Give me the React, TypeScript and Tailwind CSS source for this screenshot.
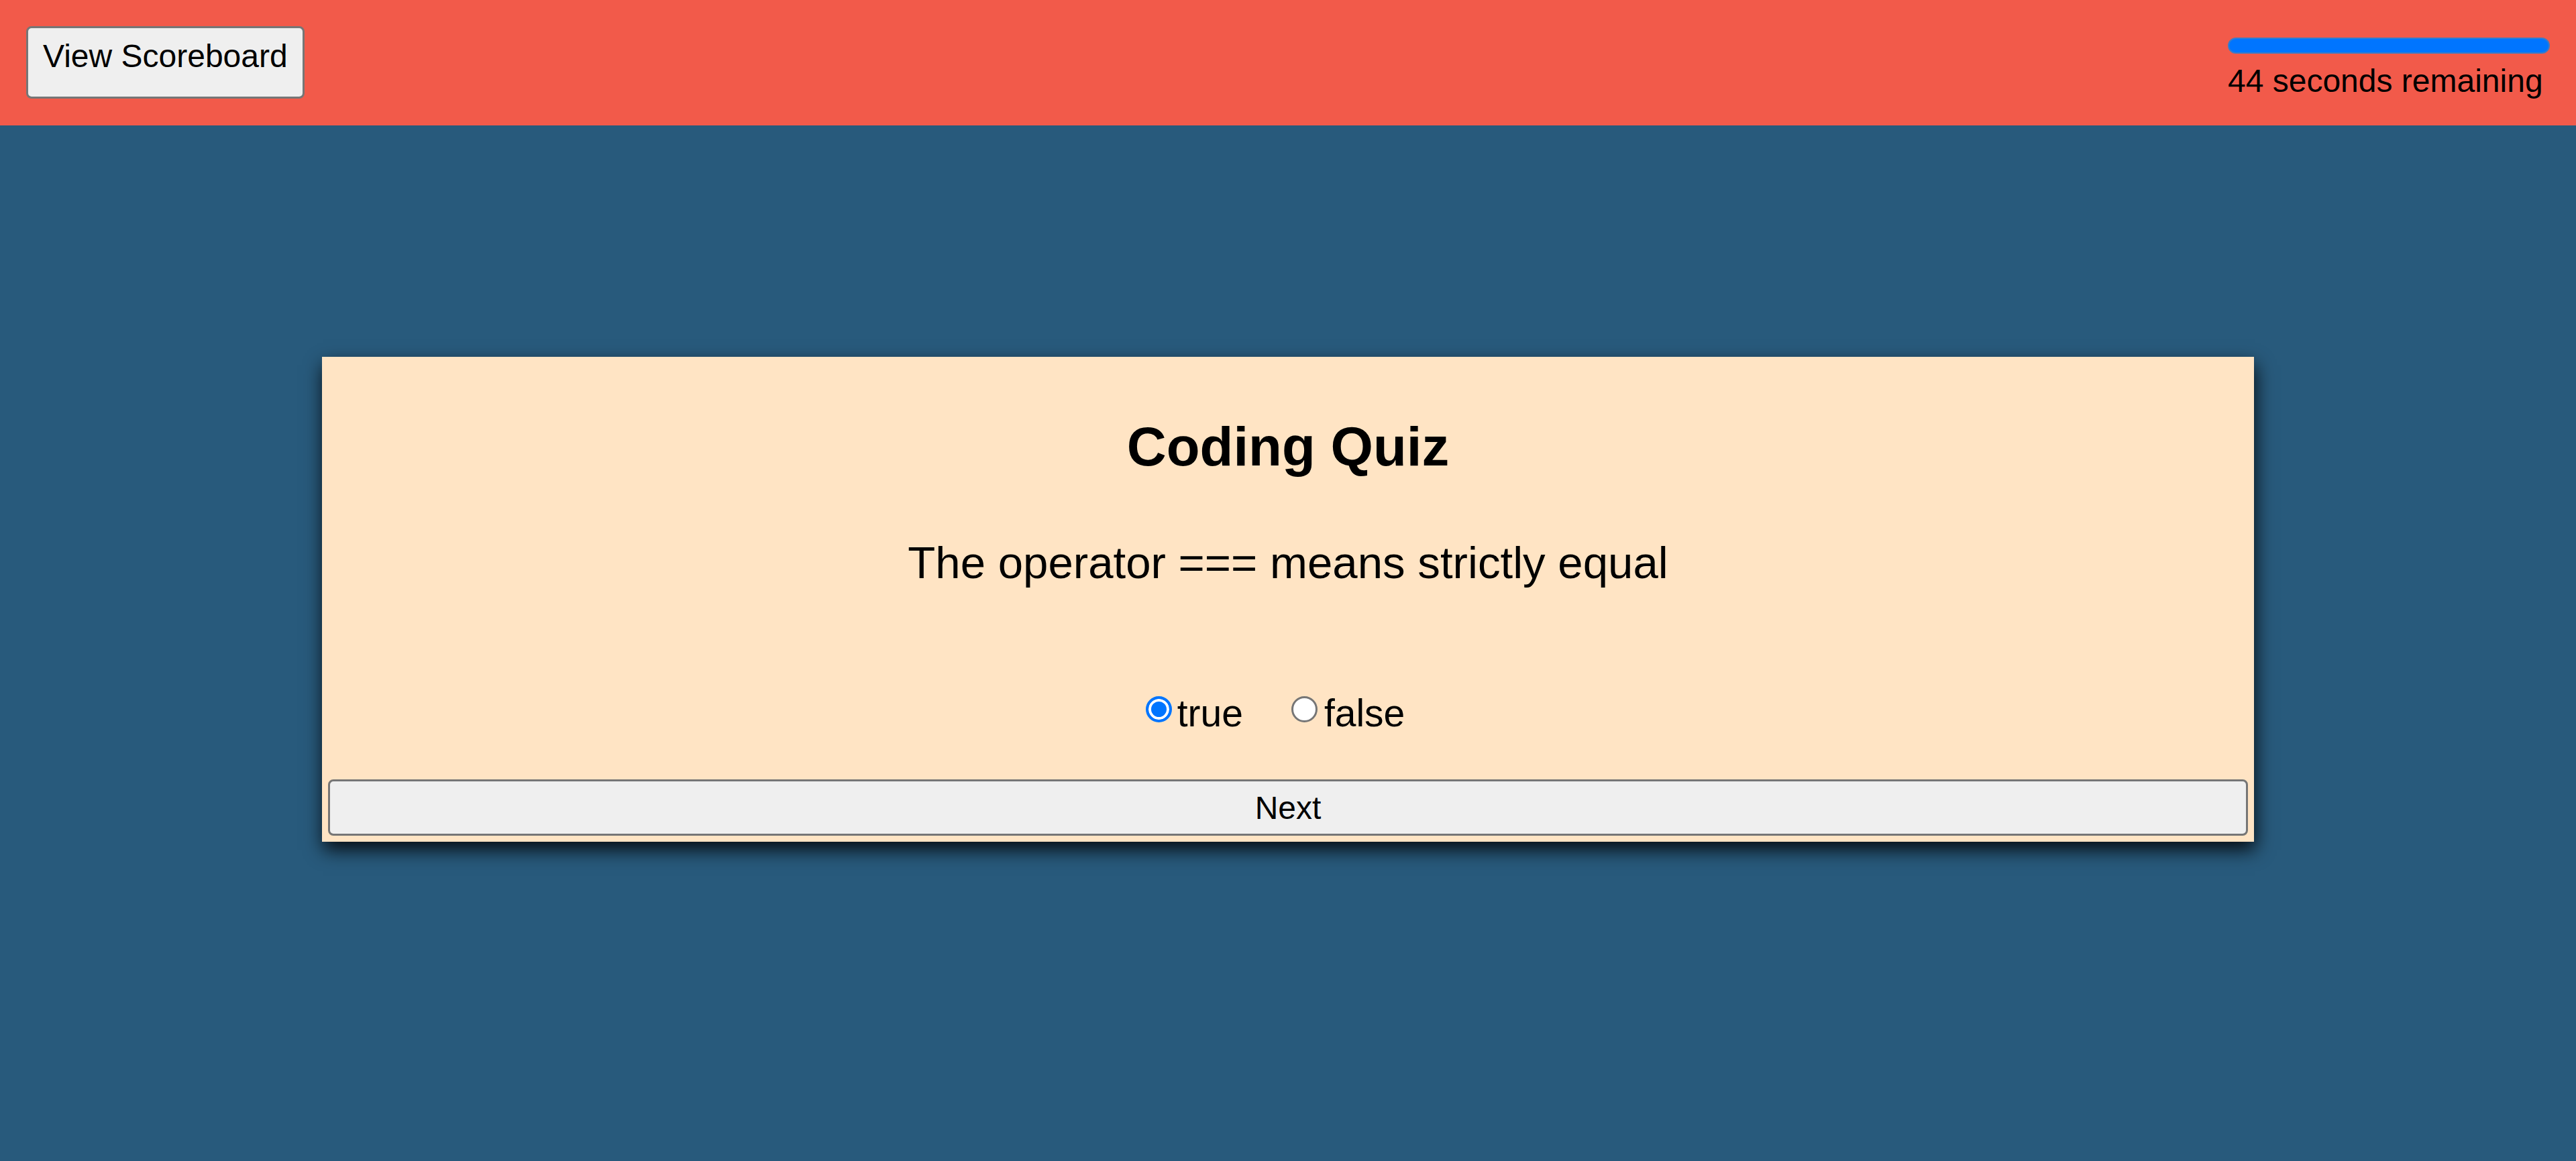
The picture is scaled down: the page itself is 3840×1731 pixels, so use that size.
import { useState } from "react";

const font = "font-['Liberation_Sans',Arial,sans-serif]";

function Header({ seconds }: { seconds: number }) {
  return (
    <header className="flex h-[187px] items-start justify-between bg-[#f25a4a] p-[39px]">
      <button className="h-[108px] rounded-[8px] border-[3px] border-[#767676] bg-[#efefef] px-[22px] pb-[34px] pt-[14px] text-[48px] leading-[normal] text-black">
        View Scoreboard
      </button>
      <div className="flex w-[480px] flex-col">
        <div className="mt-[17px] h-[24px] w-full rounded-full border-2 border-[#3a7cc8] bg-[#0075ff]" />
        <p className="mt-[13px] text-[48px] leading-[normal] text-black">
          {seconds} seconds remaining
        </p>
      </div>
    </header>
  );
}

function Radio({ checked, onChange }: { checked: boolean; onChange: () => void }) {
  return (
    <input
      type="radio"
      name="answer"
      checked={checked}
      onChange={onChange}
      className="mt-[8px] h-[39px] w-[39px] shrink-0 appearance-none rounded-full border-[3px] border-[#767676] bg-white checked:border-[4px] checked:border-[#0075ff] checked:bg-[#0075ff] checked:shadow-[inset_0_0_0_4px_white]"
    />
  );
}

export default function App() {
  const [answer, setAnswer] = useState("true");

  return (
    <div className={`min-h-[1731px] bg-[#285a7c] ${font}`}>
      <Header seconds={44} />

      <main className="mx-auto mt-[345px] flex w-[2880px] flex-col bg-[#ffe4c4] pt-[87px] pb-[9px] text-black shadow-[2px_12px_26px_rgba(0,0,0,0.85)]">
        <h1 className="text-center text-[81.6px] font-bold leading-[normal]">Coding Quiz</h1>
        <p className="mt-[87px] text-center text-[67.2px] leading-[normal]">
          The operator === means strictly equal
        </p>

        <div className="mt-[153px] flex items-start justify-center pr-[38px] text-[57px] leading-[normal]">
          <label className="flex items-start">
            <Radio checked={answer === "true"} onChange={() => setAnswer("true")} />
            <span className="ml-[8px]">true</span>
          </label>
          <label className="ml-[72px] flex items-start">
            <Radio checked={answer === "false"} onChange={() => setAnswer("false")} />
            <span className="ml-[10px]">false</span>
          </label>
        </div>

        <button className="mx-[9px] mt-[66px] h-[84px] rounded-[8px] border-[3px] border-[#767676] bg-[#efefef] text-[48px] leading-[normal] text-black">
          Next
        </button>
      </main>
    </div>
  );
}
